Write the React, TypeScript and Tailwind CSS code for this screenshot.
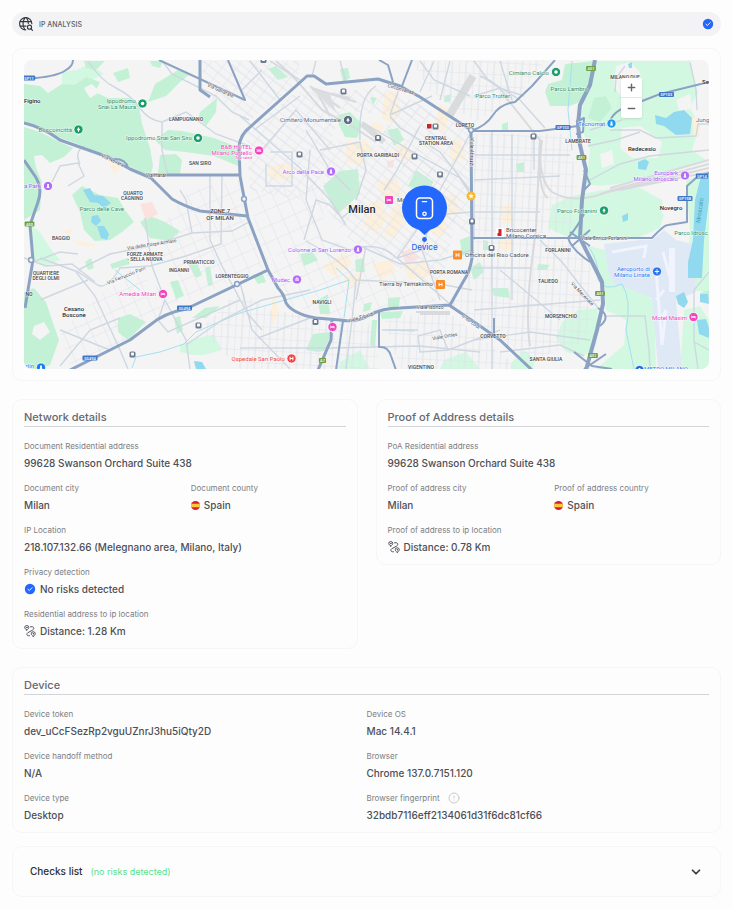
import { useState, type ReactNode } from 'react';
import { ChevronDown, CircleAlert, Minus, Plus } from 'lucide-react';

type Label = { x: number; y: number; text: string; size?: number; anchor?: 'start' | 'middle' | 'end'; rotate?: number };

const BRIGHT_PARKS = [
  '24,84 40,86 48,93 62,84 75,85 86,77 100,82 95,92 108,98 130,98 139,106 142,124 150,148 153,166 150,178 135,169 105,155 75,143 50,134 24,124',
  '24,127 40,132 60,142 73,148 64,157 50,163 42,155 34,156 36,168 42,182 40,210 24,220',
  '155,84 178,70 190,74 180,82 166,96 148,102',
  '155,140 168,130 182,131 214,138 240,148 238,166 214,156 185,152 165,150',
  '160,155 176,154 182,160 180,174 158,174',
  '200,112 217,98 216,112 206,126 198,118',
  '113,73 128,68 130,78 118,82',
  '84,61 105,61 96,70 86,68',
  '150,61 163,61 160,68 152,66',
  '72,195 82,186 100,195 118,198 125,210 134,222 122,232 110,240 95,241 84,230 80,212',
  '140,222 150,216 165,222 180,231 170,241 150,238',
  '24,292 34,288 46,302 52,320 59,340 50,365 40,369 24,369',
  '118,318 130,314 146,322 128,340 118,332',
  '110,264 128,258 130,264 112,269',
  '85,262 91,258 94,268 88,270',
  '170,282 178,280 184,296 176,299',
  '188,264 196,260 202,275 196,278',
  '205,268 210,266 213,285 208,286',
  '150,226 162,222 178,230 168,238',
  '338,115 350,112 362,124 357,138 345,137 339,125',
  '323,186 340,171 358,169 360,194 350,203 338,214 330,200',
  '387,130 398,128 404,140 394,146',
  '408,186 416,170 434,182 426,192',
  '268,69 276,66 288,77 278,80',
  '340,69 348,68 350,78 343,82',
  '445,96 451,94 450,102 444,102',
  '370,97 377,98 373,105',
  '545,92 548,84 562,80 565,64 594,61 590,80 584,100 570,106 550,106',
  '594,98 606,96 612,108 600,122 588,118',
  '460,240 470,236 470,252 462,256',
  '388,298 400,297 399,307 388,308',
  '364,304 372,302 370,310 363,312',
  '313,334 330,332 328,350 318,352 306,350',
  '380,312 403,311 400,318 382,319',
  '372,320 377,320 375,348 370,345',
  '252,275 262,272 266,282 258,284',
  '300,254 312,252 318,260 304,266',
  '318,300 328,294 330,314 320,314',
  '355,260 364,258 365,272 356,272',
  '492,288 508,288 510,298 494,296',
  '538,264 550,265 546,270 537,270',
  '516,164 524,162 524,172 517,172',
  '502,124 508,122 508,132 502,131',
  '192,318 205,308 220,306 206,318',
  '174,318 180,316 183,330 177,334',
  '470,268 480,262 484,272 474,280',
  '483,240 488,241 488,250 483,250',
  '700,293 709,290 709,300 702,298',
];

const LIGHT_PARKS = [
  '62,72 76,70 90,64 104,74 88,82 76,86 62,84',
  '60,92 72,88 80,96 66,104',
  '28,224 40,232 50,248 60,260 46,266 34,262 30,244',
  '180,345 196,338 214,335 222,350 204,355 194,355 180,352',
  '340,362 360,350 370,369 340,369',
  '444,360 466,352 480,369 440,369',
  '594,61 690,61 698,92 690,108 700,126 692,150 706,160 650,180 600,186 586,184 590,150 580,124 584,98',
  '548,228 552,205 572,196 602,190 640,188 662,200 664,214 660,228 640,237 600,241 586,238 565,236',
  '588,246 606,250 622,284 640,292 654,300 656,369 596,369 624,345 626,320 606,310 604,285',
  '556,338 562,322 578,310 598,308 596,346 584,356 566,352',
  '686,180 709,172 709,292 686,290 690,230',
  '684,310 700,306 709,320 709,369 680,369',
  '512,362 524,350 536,360 532,369 510,369',
];

// built-up land inside the green belt
const CLEARINGS = [
  '84,88 92,84 100,92 90,98',
  '60,166 70,160 82,168 76,180 58,182',
  '34,326 44,322 50,332 40,340 32,334',
  '616,66 630,62 640,72 638,92 622,98 614,86',
  '622,128 640,126 662,142 658,158 632,158 620,148',
  '676,100 690,94 692,108 680,112',
  '600,154 612,150 614,164 602,168',
  '664,186 686,184 684,222 662,214',
  '608,320 622,318 624,340 610,344',
];

const SANDS = [
  '384,94 396,90 400,112 392,124 382,118',
  '374,122 384,126 378,138 366,130',
  '268,165 290,164 292,178 270,180',
  '346,142 366,140 376,156 358,166 346,160',
  '440,104 452,112 444,132 434,128',
  '376,182 396,178 402,194 384,200',
  '366,204 380,200 388,216 378,234 364,226',
  '392,208 404,202 404,222 394,238 384,236',
  '434,198 454,194 460,210 448,216',
  '430,222 446,220 444,236 432,234',
  '322,266 346,252 352,264 334,276',
  '344,278 360,272 362,282 348,288',
  '372,264 390,260 396,272 380,280',
  '402,264 426,262 430,276 410,280',
  '448,144 460,138 466,156 452,164',
  '396,146 406,144 414,158 402,162',
  '110,166 118,160 120,170 114,174',
  '62,232 74,228 68,236',
  '500,206 512,203 513,222 503,224',
  '500,240 514,238 512,252 500,250',
  '692,118 698,116 700,136 694,138',
  '73,240 95,244 94,247 78,245',
  '272,300 276,296 278,316 272,324',
];

const WATERS = [
  '83,190 90,188 94,195 103,196 111,203 104,208 98,203 90,202',
  '92,216 98,215 101,221 96,226 91,222',
  '97,226 104,226 109,234 107,240 101,238',
  '655,115 666,118 674,112 684,110 692,118 690,134 676,135 664,126 656,124',
  '638,162 645,159 649,162 646,170 638,169',
  '701,176 709,175 709,200 704,240 702,278 688,278 688,262 693,240 695,200',
  '622,216 628,213 628,220 623,222',
  '676,296 684,292 688,302 684,308 678,304',
  '700,294 708,294 709,304 700,302',
  '697,320 706,319 709,328 709,338 699,334',
  '194,361 202,362 206,369 196,369',
  '628,64 632,62 632,68 629,68',
];

const GRIDS: [string, string][] = [
  ['246,132 296,92 330,92 380,88 400,94 440,120 340,110 320,180 300,200 250,190', 'url(#grid-tilt)'],
  ['190,190 240,180 246,216 262,268 190,300 150,240', 'url(#grid-slope)'],
  ['400,94 468,130 470,240 420,190 380,140', 'url(#grid-tilt)'],
  ['474,134 570,134 578,200 572,232 474,236', 'url(#grid-straight)'],
  ['474,240 570,240 590,260 590,340 530,360 450,306 472,260', 'url(#grid-straight)'],
  ['262,270 300,230 360,250 440,302 380,308 350,320 292,306', 'url(#grid-slope)'],
  ['270,310 372,324 380,369 240,369 200,330 240,290', 'url(#grid-straight)'],
  ['384,318 448,312 520,369 400,369', 'url(#grid-straight)'],
  ['60,330 130,270 180,300 120,345 70,366', 'url(#grid-slope)'],
  ['330,140 420,150 460,200 440,290 350,240 320,200', 'url(#grid-tilt)'],
  ['200,61 300,61 296,84 250,120 210,100', 'url(#grid-tilt)'],
  ['474,61 545,61 520,96 475,122 430,90 412,61', 'url(#grid-straight)'],
  ['248,190 320,184 324,220 300,232 264,262', 'url(#grid-slope)'],
];

const MINOR_ROADS = [
  'M88 61 Q100 80 116 88 T140 108 T162 122 V150 L168 176',
  'M163 62 L172 74 L216 96 L232 112 L249 120',
  'M162 122 L186 112 L216 134 L249 146',
  'M52 182 L60 166 L78 163 L84 176 L68 186 M80 164 Q74 152 84 146',
  'M210 176 V240 L222 266 L248 314 L262 330',
  'M222 176 L221 244 L186 256 L150 266 L120 268 Q106 292 96 284 L78 272 L40 258',
  'M76 272 L95 296 L120 350 L128 369',
  'M78 270 L110 254 L150 246 L192 233 L232 231 L249 222',
  'M145 218 L152 266 L165 300 L186 340 L190 369',
  'M192 233 L186 200 L180 190',
  'M165 300 L158 320 L168 332 L240 300',
  'M24 258 L46 266 L72 264 L95 282',
  'M33 262 L60 252 L78 254 M40 300 L88 280',
  'M60 366 L90 330 L120 318 M60 330 L110 350',
  'M186 345 L222 320 L262 300 L310 290',
  'M240 348 H330 L420 346 L480 352',
  'M240 282 L252 330 L290 369 M258 338 L310 318',
  'M306 241 Q342 260 356 280 L440 284 L472 290',
  'M304 240 L316 200 L330 205 L342 218 L356 206',
  'M240 116 L300 168 L330 200 L346 225',
  'M254 130 L300 96 M262 150 L296 110 L330 150',
  'M266 164 V186 H292 V152 H270',
  'M320 150 L360 142 L366 170 L356 200',
  'M360 140 Q358 96 376 86',
  'M306 130 L330 170 L350 190',
  'M362 122 L420 156 L460 178 L474 200 L474 240',
  'M390 116 L400 128 L440 152 L470 190',
  'M390 115 L400 86 M390 115 L432 96 M420 126 L396 172 L384 190',
  'M471 132 L440 190 L422 250 L397 258 L450 304',
  'M422 250 L440 300 M397 258 L420 225 L446 214 L472 212',
  'M360 246 L400 264 L440 260 L472 250',
  'M310 150 L306 200 L322 240 L350 250 Q380 240 396 258',
  'M356 280 L352 320 L346 369 M366 246 L356 300',
  'M418 336 L420 352 L448 350 L440 330 Z M448 350 L500 330 M382 330 H418',
  'M492 130 V369 M512 134 V300 M534 134 V170 M474 155 H570 M474 180 L560 176 M474 212 H540 M474 268 H530',
  'M540 240 L562 262 L598 308 M474 310 L600 300 M500 270 L536 300 L560 320',
  'M474 340 L530 332 L590 340 M500 352 L560 345 L584 356',
  'M590 130 L622 120 M610 130 L640 130 L656 138 L696 136 L698 124 L709 124',
  'M615 92 L616 78 L625 66 M690 62 L696 90 L697 110 M588 146 L616 140 L640 132',
  'M590 180 L620 164 L650 156 L709 150',
  'M604 316 L645 316 L649 350 L650 369 M694 290 V340 L698 369 M694 290 L709 272 M694 342 L709 350',
  'M474 61 L488 80 L520 100 L545 128 M500 61 L512 100 M474 96 L500 88 L524 96',
  'M420 61 L434 80 L470 96 M434 61 L420 92 M450 61 L440 100',
  'M270 61 L300 80 M316 61 L312 76 M340 61 L346 82 M240 92 L262 70 M250 61 L280 100',
];

const RAILS = [
  'M276 61 L292 75 L322 110 L352 126 L376 142',
  'M310 86 L340 108 M314 90 L350 98 M312 88 L356 102 M318 94 L330 116',
  'M480 76 Q500 84 508 100 L540 140 Q538 180 552 192 Q576 206 612 190 L709 164',
  'M542 140 Q536 190 548 198 M540 140 L536 230 Q524 310 530 346',
  'M600 194 L709 168 M610 188 L709 160 M620 190 L709 172',
  'M416 312 H450 M420 314 H450',
];

const MAIN_ROADS: [string, number][] = [
  ['M24 78 H36 Q58 76 66 70 Q73 66 73 60', 2],
  ['M24 123 Q42 127 60 140 L108 157 L130 169 L151 178 L172 199 Q184 206 200 211 L247 216', 3],
  ['M112 159 Q126 158 128 168', 2],
  ['M146 175 H240', 3],
  ['M24 160 L35 176 Q43 188 38 202 L30 225 L33 260 L25 308', 3],
  ['M200 60 V90 L210 97', 3],
  ['M159 60 L200 79 L245 100 L228 60', 2],
  ['M240 176 L239 146 Q241 134 249 128 L296 86 L307 76 L314 76 L326 84 L378 79 L400 86 L420 97 L471 130', 3],
  ['M471 130 L472 258 Q470 272 463 282 L450 305 L400 308 Q382 308 370 315 Q356 323 340 320 L316 318 Q293 314 286 303 Q284 294 278 288 L268 270 L248 218 L240 176', 3],
  ['M268 270 L186 309 Q164 313 150 325 L130 340 L70 370', 3],
  ['M471 131 L540 131 L578 126', 2],
  ['M471 131 Q486 126 493 115 T515 102 L532 86 L555 60', 2],
  ['M379 60 L388 65 L393 82', 2],
  ['M412 60 L402 86', 2],
  ['M595 60 L590 85 L580 105 L578 124 L580 145 L586 170 L582 200 L580 238 L590 258 L602 282 L603 304 L597 330 L586 370', 4],
  ['M576 122 L584 118 L583 132 L576 134 M584 170 L590 184 L584 190', 2],
  ['M610 121 Q614 110 632 105 L660 94 L709 82', 2],
  ['M709 173 L696 178 L687 186 V222 L668 225 Q664 225 652 238 L590 238 H472', 2],
  ['M570 232 L590 246 M572 246 L590 230 M568 238 Q578 226 584 214 M590 262 Q572 250 568 238', 2],
  ['M598 308 Q612 316 600 326 M574 352 L592 366 L612 369 M584 369 L606 354', 2],
  ['M449 305 L480 326 L500 340 L532 370', 3],
  ['M379 311 V347 Q388 346 391 356 L396 370', 2],
  ['M343 321 L336 370', 2],
  ['M332 318 L331 340 L318 370', 3],
  ['M494 318 V336', 2],
];

const AREAS: Label[] = [
  { x: 186, y: 121, text: 'LAMPUGNANO' },
  { x: 200, y: 165, text: 'SAN SIRO' },
  { x: 133, y: 195, text: 'QUARTO' },
  { x: 132, y: 200, text: 'CAGNINO' },
  { x: 220, y: 213, text: 'ZONE 7', size: 6 },
  { x: 220, y: 220, text: 'OF MILAN', size: 6 },
  { x: 61, y: 240, text: 'BAGGIO' },
  { x: 46, y: 275, text: 'QUARTIERE' },
  { x: 46, y: 280, text: 'DEGLI OLMI' },
  { x: 145, y: 256, text: 'FORZE ARMATE' },
  { x: 145, y: 261, text: '- SELLA NUOVA' },
  { x: 199, y: 264, text: 'PRIMATICCIO' },
  { x: 179, y: 272, text: 'INGANNI' },
  { x: 232, y: 278, text: 'LORENTEGGIO' },
  { x: 322, y: 304, text: 'NAVIGLI' },
  { x: 378, y: 157, text: 'PORTA GARIBALDI' },
  { x: 436, y: 140, text: 'CENTRAL' },
  { x: 436, y: 145, text: 'STATION AREA' },
  { x: 465, y: 127, text: 'LORETO' },
  { x: 578, y: 143, text: 'LAMBRATE' },
  { x: 625, y: 79, text: 'MILANO DUE' },
  { x: 449, y: 274, text: 'PORTA ROMANA' },
  { x: 558, y: 252, text: 'FORLANINI' },
  { x: 548, y: 283, text: 'TALIEDO' },
  { x: 561, y: 318, text: 'MORSENCHIO' },
  { x: 493, y: 338, text: 'CORVETTO' },
  { x: 546, y: 361, text: 'SANTA GIULIA' },
  { x: 421, y: 369, text: 'VIGENTINO' },
  { x: 29, y: 296, text: 'NO' },
];

const TOWNS: Label[] = [
  { x: 24, y: 103, text: 'Figino', anchor: 'start' },
  { x: 74, y: 311, text: 'Cesano' },
  { x: 74, y: 317, text: 'Boscone' },
  { x: 642, y: 151, text: 'Redecesio' },
  { x: 671, y: 210, text: 'Novegro' },
  { x: 702, y: 84, text: 'Se', anchor: 'start' },
  { x: 362, y: 213, text: 'Milan', size: 11 },
];

const STREETS: Label[] = [
  { x: 220, y: 92, text: 'Via Gallarate', rotate: 24 },
  { x: 112, y: 162, text: 'Via Novara', rotate: 24 },
  { x: 156, y: 177, text: 'Via Harar' },
  { x: 152, y: 246, text: 'Via delle Forze Armate', rotate: -9 },
  { x: 127, y: 277, text: 'Via Ferruccio Parri', rotate: -22 },
  { x: 401, y: 91, text: 'Circonvallaz.', rotate: 16 },
  { x: 470, y: 152, text: 'Viale Abruzzi', rotate: 90 },
  { x: 361, y: 319, text: 'Viale Tibaldi', rotate: -16 },
  { x: 430, y: 309, text: 'Viale Isonzo' },
  { x: 445, y: 338, text: 'Viale Ortles', rotate: -10 },
  { x: 470, y: 323, text: 'C.so Lodi', rotate: 36 },
  { x: 604, y: 240, text: 'Viale Enrico Forlanini' },
  { x: 581, y: 295, text: 'Via Mecenate', rotate: 46 },
];

const GREEN = '#2f8f6b';
const PURPLE = '#a855f7';
const PINK = '#f542c0';
const BLUE = '#3478f6';
const SLATE = '#5b6b80';
const DARK = '#4b4f56';

const PLACES: (Label & { color: string })[] = [
  { x: 136, y: 103, text: 'Ippodromo', color: GREEN },
  { x: 136, y: 109, text: 'Snai La Maura', color: GREEN },
  { x: 72, y: 132, text: 'Boscoincittà', color: GREEN },
  { x: 192, y: 140, text: 'Ippodromo Snai San Siro', color: GREEN },
  { x: 124, y: 211, text: 'Parco delle Cave', color: GREEN },
  { x: 549, y: 75, text: 'Cimiano Calcio', color: GREEN },
  { x: 510, y: 98, text: 'Parco Trotter', color: GREEN },
  { x: 588, y: 91, text: 'Parco Lambro', color: GREEN },
  { x: 597, y: 213, text: 'Parco Forlanini', color: GREEN },
  { x: 708, y: 235, text: 'Parco Idrosc', color: GREEN },
  { x: 341, y: 122, text: 'Cimitero Monumentale', color: SLATE },
  { x: 324, y: 174, text: 'Arco della Pace', color: PURPLE },
  { x: 351, y: 252, text: 'Colonne di San Lorenzo', color: PURPLE },
  { x: 290, y: 282, text: 'Mudec', color: PURPLE },
  { x: 24, y: 188, text: 'a Park', anchor: 'start', color: PURPLE },
  { x: 678, y: 175, text: 'Europark', color: PURPLE },
  { x: 678, y: 181, text: 'Milano Idroscalo', color: PURPLE },
  { x: 252, y: 149, text: 'B&B HOTEL', color: PINK },
  { x: 252, y: 155, text: 'Milano Portello', color: PINK },
  { x: 252, y: 159, text: 'Top rated', size: 4, color: PINK },
  { x: 156, y: 296, text: 'Amedia Milan', color: PINK },
  { x: 687, y: 320, text: 'Motel Maxim', color: PINK },
  { x: 285, y: 361, text: 'Ospedale San Paolo', color: '#ef4444' },
  { x: 605, y: 126, text: 'Tecnomat', color: BLUE },
  { x: 650, y: 271, text: 'Aeroporto di', color: BLUE },
  { x: 650, y: 277, text: 'Milano Linate', color: BLUE },
  { x: 34, y: 368, text: 'rlin', color: BLUE },
  { x: 688, y: 371, text: 'METRO MILANO', color: BLUE },
  { x: 433, y: 286, text: 'Tierra by Temakinho', color: DARK },
  { x: 465, y: 257, text: 'Officina del Riso Cadore', anchor: 'start', color: DARK },
  { x: 506, y: 232, text: 'Bricocenter', anchor: 'start', color: DARK },
  { x: 506, y: 238, text: 'Milano Corsica', anchor: 'start', color: DARK },
  { x: 397, y: 202, text: 'Mo', anchor: 'start', color: DARK },
  { x: 696, y: 122, text: 'Jung', anchor: 'start', color: SLATE },
];

const PINS: [number, number, string, string][] = [
  [142.5, 103.5, '#1a9c6b', 'ring'],
  [78.5, 129.5, '#1a9c6b', 'tree'],
  [198, 138, '#1a9c6b', 'ring'],
  [556, 72, '#1a9c6b', 'ring'],
  [604, 210.5, '#1a9c6b', 'tree'],
  [348, 120, '#5b6b80', 'tree'],
  [331, 171.5, '#b26bf7', 'tower'],
  [358, 249.5, '#b26bf7', 'tower'],
  [297, 279.5, '#b26bf7', 'museum'],
  [48, 186, '#b26bf7', 'tower'],
  [685, 175.5, '#b26bf7', 'tower'],
  [259, 150.5, '#f542c0', 'bed'],
  [163, 294, '#f542c0', 'bed'],
  [332.5, 327, '#f542c0', 'bed'],
  [693.5, 317, '#f542c0', 'bed'],
  [291.5, 358.5, '#ef4444', 'hospital'],
  [611.5, 123.5, '#1a9bf0', 'tower'],
  [657, 271.5, '#2b74f5', 'plus'],
  [41, 367.5, '#1a7bf0', 'tower'],
  [639.5, 370, '#1a6bf0', 'tower'],
];

const TRANSIT = [
  [343.5, 91.5], [378, 138], [299.5, 154.5], [414.5, 156.5], [440, 174.5], [435.5, 126.5], [533.5, 136.5], [491.5, 248],
  [472, 221.5], [315.5, 322], [198.5, 325.5], [132.5, 354.5], [263.5, 60],
];

const SHIELDS: [number, number, string, string][] = [
  [29, 78, 'SP11', '#3f78c9'],
  [29.5, 224, 'A50', '#6d9f45'],
  [591, 68.5, 'A51', '#6d9f45'],
  [581.5, 157.5, 'A51', '#6d9f45'],
  [600, 293.5, 'A51', '#6d9f45'],
  [593, 355.5, 'A51', '#6d9f45'],
  [322.5, 360.5, 'A7', '#6d9f45'],
  [563, 127.5, 'SP103', '#3f78c9'],
  [666.5, 94.5, 'SP103', '#3f78c9'],
  [702, 176, 'SP14', '#3f78c9'],
  [685, 198.5, 'SP15B', '#3f78c9'],
  [184.5, 308, 'SS494', '#3f78c9'],
  [90, 358, 'SS494', '#3f78c9'],
];

const GLYPHS: Record<string, ReactNode> = {
  ring: <circle r="1.8" fill="#fff" />,
  tree: <path d="M0 -2.6 L1.7 .8 H.5 V2.2 H-.5 V.8 H-1.7 Z" fill="#fff" />,
  tower: <path d="M-.9 -2 H.9 V.6 L1.7 2 H-1.7 L-.9 .6 Z" fill="#fff" />,
  museum: <path d="M-2 -.8 L0 -2.2 L2 -.8 Z M-1.6 -.4 H-.8 V1.6 H-1.6 Z M-.4 -.4 H.4 V1.6 H-.4 Z M.8 -.4 H1.6 V1.6 H.8 Z" fill="#fff" />,
  bed: <path d="M-2.2 -1.4 H-1.6 V.2 H2.2 V1.5 H1.7 V1 H-1.7 V1.5 H-2.2 Z M-1.2 -.9 H-.2 V-.1 H-1.2 Z M.1 -.9 H1.4 Q2 -.9 2 -.1 H.1 Z" fill="#fff" />,
  hospital: <path d="M-1.4 -1.8 V1.8 M1.4 -1.8 V1.8 M-1.4 0 H1.4" stroke="#fff" fill="none" />,
  plus: <path d="M0 -2.2 V2.2 M-2.2 0 H2.2" stroke="#fff" fill="none" />,
};

const MapText = ({ label, fill, size, weight }: { label: Label; fill: string; size: number; weight: number }) => (
  <text
    x={label.x}
    y={label.y}
    textAnchor={label.anchor || 'middle'}
    fontSize={label.size || size}
    fontWeight={weight}
    fill={fill}
    stroke="#ffffff"
    strokeOpacity="0.7"
    strokeWidth="1"
    paintOrder="stroke"
    transform={label.rotate ? `rotate(${label.rotate} ${label.x} ${label.y})` : undefined}
  >
    {label.text}
  </text>
);

const CityMap = () => (
  <svg viewBox="24 60 685 309" className="block h-auto w-full rounded-lg font-[Roboto,sans-serif]" role="img" aria-label="Map of Milan">
    <defs>
      <pattern id="grid-straight" width="14" height="12" patternUnits="userSpaceOnUse" patternTransform="rotate(3)">
        <path d="M0 0 H14 M0 0 V12 M7 0 V12" stroke="#dde2e9" strokeWidth="1" fill="none" />
      </pattern>
      <pattern id="grid-tilt" width="12" height="14" patternUnits="userSpaceOnUse" patternTransform="rotate(38)">
        <path d="M0 0 H12 M0 0 V14 M0 7 H12" stroke="#dde2e9" strokeWidth="1" fill="none" />
      </pattern>
      <pattern id="grid-slope" width="13" height="15" patternUnits="userSpaceOnUse" patternTransform="rotate(-24)">
        <path d="M0 0 H13 M0 0 V15" stroke="#dde2e9" strokeWidth="1" fill="none" />
      </pattern>
    </defs>
    <rect x="24" y="60" width="685" height="309" fill="#f4f4f5" />

    {LIGHT_PARKS.map((points) => <polygon key={points} points={points} fill="#d3f8e2" />)}
    {BRIGHT_PARKS.map((points) => <polygon key={points} points={points} fill="#c3f1d5" />)}
    {CLEARINGS.map((points) => <polygon key={points} points={points} fill="#f4f4f5" />)}
    {SANDS.map((points) => <polygon key={points} points={points} fill="#fcf0dc" />)}
    <polygon points="140,204 152,202 158,214 146,220" fill="#fbe2e0" />
    <polygon points="401,252 410,249 420,258 406,264" fill="#fbe2e0" />
    <polygon points="387,161 394,160 393,168 387,167" fill="#fbe2e0" />

    {GRIDS.map(([points, fill]) => <polygon key={points} points={points} fill={fill} />)}

    {/* Linate airport */}
    <path d="M604 244 L640 240 L652 240 L664 230 L676 240 L692 244 L696 292 L676 300 L682 369 H658 L652 298 L632 290 L614 284 L608 270 Z" fill="#dfe8f5" />
    <path d="M612 252 L646 246 L644 258 M656 270 L662 345 M663 252 L672 285 M656 300 L664 290 M660 320 L666 310 L662 345" stroke="#f1f3ff" strokeWidth="3" fill="none" />
    <path d="M672 248 V292" stroke="#f1f3ff" strokeWidth="6" />

    {WATERS.map((points) => <polygon key={points} points={points} fill="#90d9ef" />)}
    <path d="M132 368 L136 357 L160 352 L184 344 L196 332 L240 313 L320 290 L349 280 M336 268 L349 280 L344 318 M115 270 L140 290 M572 61 L568 110 L572 150 M588 246 Q600 262 598 280 Q604 292 622 284 Q632 300 626 330 L634 369 M390 330 L414 331" stroke="#a5dff0" strokeWidth="1" fill="none" />

    {RAILS.map((d) => <path key={d} d={d} stroke="#d9dadd" strokeWidth="2" fill="none" />)}
    <path d="M473 76 L449 116" stroke="#dadbdd" strokeWidth="8" />
    <path d="M362 124 L384 142" stroke="#dadbdd" strokeWidth="6" />
    <path d="M310 88 L336 112 L330 94 Z" fill="#dcdde0" />

    {MINOR_ROADS.map((d) => <path key={d} d={d} stroke="#cfd7e1" strokeWidth="1.4" fill="none" />)}
    {MAIN_ROADS.map(([d, width]) => (
      <path key={d} d={d} stroke="#8ba2c3" strokeWidth={width} strokeLinejoin="round" fill="none" />
    ))}
    {[[237, 284], [471, 130], [244, 199], [31, 260]].map(([x, y]) => (
      <circle key={x} cx={x} cy={y} r="2.4" fill="#f4f4f5" stroke="#8ba2c3" strokeWidth="1.5" />
    ))}

    {SHIELDS.map(([x, y, text, fill]) => (
      <g key={`${x}-${y}`}>
        <rect x={x - text.length * 1.3 - 1} y={y - 2.5} width={text.length * 2.6 + 2} height="5" rx="1" fill={fill} />
        <text x={x} y={y + 1.5} fontSize="4" fontWeight="500" fill="#fff" textAnchor="middle">{text}</text>
      </g>
    ))}

    {TRANSIT.map(([x, y]) => (
      <g key={`${x}-${y}`} transform={`translate(${x} ${y})`}>
        <rect x="-3" y="-3" width="6" height="6" rx="1.6" fill="#6c7b90" />
        <rect x="-1.4" y="-1.9" width="2.8" height="3" rx="0.6" fill="#fff" />
      </g>
    ))}
    <rect x="427" y="124" width="4.5" height="4.5" fill="#c1272d" />

    {STREETS.map((label) => <MapText key={label.text} label={label} fill="#4b4f56" size={5} weight={400} />)}
    {AREAS.map((label) => <MapText key={label.text} label={label} fill="#3f4349" size={5} weight={500} />)}
    {TOWNS.map((label) => <MapText key={label.text} label={label} fill="#25272b" size={6} weight={500} />)}
    {PLACES.map((label) => (
      <MapText key={`${label.text}-${label.y}`} label={{ anchor: 'end', ...label }} fill={label.color} size={6} weight={400} />
    ))}
    <text transform="translate(700 223) rotate(-82)" fontSize="6" fill="#3d9fb5">Idroscalo</text>

    {PINS.map(([x, y, fill, glyph]) => (
      <g key={`${x}-${y}`} transform={`translate(${x} ${y})`}>
        <path d="M-3 3 L0 6 L3 3 Z" fill="#fff" />
        <circle r="4.6" fill={fill} stroke="#fff" strokeWidth="0.8" />
        {GLYPHS[glyph]}
      </g>
    ))}

    <g transform="translate(389 200)">
      <rect x="-4" y="-4" width="8" height="8" rx="1" fill="#f542c0" />
      {GLYPHS.bed}
    </g>
    {[[457.5, 255], [440.5, 284.5]].map(([x, y]) => (
      <g key={x} transform={`translate(${x} ${y})`}>
        <rect x="-4.5" y="-4.5" width="9" height="9" rx="1" fill="#fb8b24" />
        {GLYPHS.hospital}
      </g>
    ))}
    <rect x="496" y="228" width="8" height="9" rx="1" fill="#fff" />
    <path d="M498.5 229 H501.5 V236 H497.5 V233 H498.5 Z" fill="#d6202b" />
    <circle cx="471" cy="196" r="4.5" fill="#fbb52e" />
    <path d="M471 193.2 L471.8 195.1 L473.8 195.3 L472.3 196.6 L472.8 198.6 L471 197.5 L469.2 198.6 L469.7 196.6 L468.2 195.3 L470.2 195.1 Z" fill="#fff" />

    {/* device marker */}
    <path d="M418 229 L424.5 235 L431 229 Z" fill="#2467fb" />
    <circle cx="424.5" cy="208" r="22.5" fill="#2467fb" />
    <rect x="416.5" y="198" width="16" height="20.5" rx="3.5" fill="none" stroke="#fff" strokeWidth="1.5" />
    <path d="M422.3 201.6 H426.7" stroke="#fff" strokeWidth="1.2" strokeLinecap="round" />
    <circle cx="424.5" cy="213.8" r="1.7" fill="none" stroke="#fff" strokeWidth="1.3" />
    <circle cx="424.5" cy="239.5" r="2.4" fill="#2467fb" />
    <text x="424.5" y="250" fontSize="8" fontWeight="500" textAnchor="middle" fill="#2467fb" className="font-[Inter,sans-serif]">Device</text>
  </svg>
);

const GlobeSearchIcon = () => (
  <svg viewBox="0 0 24 24" className="size-[14px]" fill="none" stroke="#36383e" strokeWidth="2" strokeLinecap="round">
    <path d="M22 11.5 A10.5 10.5 0 1 0 11.5 22" />
    <path d="M10 1.5 C6 8 6 15 10 21.5 M13 1.5 C15 4.5 16 7.5 16 11 M2 8 H21 M2 15.5 H12" />
    <circle cx="18" cy="17.5" r="3.5" />
    <path d="M20.5 20 L23 22.8" />
  </svg>
);

const VerifiedIcon = () => (
  <svg viewBox="0 0 12 12" className="size-[12px] shrink-0">
    <circle cx="6" cy="6" r="5.2" fill="#2467fb" />
    <path d="M3.9 6.2 L5.4 7.5 L8.1 4.7" fill="none" stroke="#fff" strokeWidth="0.9" strokeLinecap="round" strokeLinejoin="round" />
  </svg>
);

const DistanceIcon = () => (
  <svg viewBox="0 0 24 24" className="size-[12px] shrink-0" fill="none" stroke="#50535a" strokeWidth="2" strokeLinecap="round" strokeLinejoin="round">
    <path d="M5.5 10 C3 8.5 1.5 7 1.5 5 A4 4 0 0 1 9.5 5 C9.5 7 8 8.500 5.500 10 Z" />
    <circle cx="5.5" cy="5" r="0.6" />
    <path d="M18.5 22.5 C16 21 14.5 19.5 14.5 17.5 A4 4 0 0 1 22.5 17.5 C22.5 19.5 21 21 18.5 22.5 Z" />
    <circle cx="18.5" cy="17.5" r="0.6" />
    <path d="M13 3.500 H16 C20.500 3.500 20.500 8 17.500 10 L7.500 15.500 C4.500 17.500 5.500 21.500 9 21.500 H11" />
  </svg>
);

const SpainFlag = () => (
  <svg viewBox="0 0 10 10" className="size-[9px] shrink-0">
    <circle cx="5" cy="5" r="5" fill="#d91e30" />
    <path d="M.4 3 H9.6 Q10.4 5 9.6 7 H.4 Q-.4 5 .4 3 Z" fill="#fdc83c" />
  </svg>
);

const Panel = ({ title, children }: { title: string; children: ReactNode }) => (
  <section className="rounded-[10px] border border-[#f6f6f8] px-[11px] pt-[9px] pb-2">
    <h2 className="mb-[11px] border-b border-[#d3d4d8] pb-px text-[11px] leading-4 font-medium text-[#66686e]">{title}</h2>
    {children}
  </section>
);

const Field = ({ label, hint, icon, wide, children }: { label: string; hint?: boolean; icon?: ReactNode; wide?: boolean; children: ReactNode }) => (
  <div className={wide ? 'col-span-2' : ''}>
    <dt className="flex items-center gap-2 text-[8px] leading-4 text-[#7c7e84]">
      {label}
      {hint && <CircleAlert className="size-[12px] text-[#c9cacf]" strokeWidth={2} />}
    </dt>
    <dd className="flex items-center gap-1 text-[10px] leading-[18px] font-medium text-[#4d4f56]">
      {icon}
      {children}
    </dd>
  </div>
);

const App = () => {
  const [open, setOpen] = useState(false);

  return (
    <main className="min-h-screen bg-[#fdfdfd] p-3 font-[Inter,sans-serif]">
      <header className="flex h-6 items-center rounded-full bg-[#f3f3f5] px-[7px]">
        <GlobeSearchIcon />
        <h1 className="ml-[6px] flex-1 text-[7px] leading-none font-medium text-[#5c5e64]">IP ANALYSIS</h1>
        <VerifiedIcon />
      </header>

      <section className="relative mt-3 rounded-[10px] border border-[#f6f6f8] p-[11px]">
        <CityMap />
        <div className="absolute top-[29px] right-[78px] w-[21px] divide-y divide-[#e6e6e6] rounded-[2px] bg-white shadow-sm">
          <button type="button" aria-label="Zoom in" className="flex h-5 w-full items-center justify-center text-[#66676b]">
            <Plus className="size-[11px]" strokeWidth={3} />
          </button>
          <button type="button" aria-label="Zoom out" className="flex h-5 w-full items-center justify-center text-[#66676b]">
            <Minus className="size-[11px]" strokeWidth={3} />
          </button>
        </div>
      </section>

      <div className="mt-[18px] grid grid-cols-2 items-start gap-[18px]">
        <Panel title="Network details">
          <dl className="grid grid-cols-2 gap-x-3 gap-y-2">
            <Field wide label="Document Residential address">99628 Swanson Orchard Suite 438</Field>
            <Field label="Document city">Milan</Field>
            <Field label="Document county" icon={<SpainFlag />}>Spain</Field>
            <Field wide label="IP Location">218.107.132.66 (Melegnano area, Milano, Italy)</Field>
            <Field wide label="Privacy detection" icon={<VerifiedIcon />}>No risks detected</Field>
            <Field wide label="Residential address to ip location" icon={<DistanceIcon />}>Distance: 1.28 Km</Field>
          </dl>
        </Panel>
        <Panel title="Proof of Address details">
          <dl className="grid grid-cols-2 gap-x-3 gap-y-2">
            <Field wide label="PoA Residential address">99628 Swanson Orchard Suite 438</Field>
            <Field label="Proof of address city">Milan</Field>
            <Field label="Proof of address country" icon={<SpainFlag />}>Spain</Field>
            <Field wide label="Proof of address to ip location" icon={<DistanceIcon />}>Distance: 0.78 Km</Field>
          </dl>
        </Panel>
      </div>

      <div className="mt-[18px]">
        <Panel title="Device">
          <dl className="grid grid-cols-2 gap-y-2">
            <Field label="Device token">dev_uCcFSezRp2vguUZnrJ3hu5iQty2D</Field>
            <Field label="Device OS">Mac 14.4.1</Field>
            <Field label="Device handoff method">N/A</Field>
            <Field label="Browser">Chrome 137.0.7151.120</Field>
            <Field label="Device type">Desktop</Field>
            <Field label="Browser fingerprint" hint>32bdb7116eff2134061d31f6dc81cf66</Field>
          </dl>
        </Panel>
      </div>

      <button
        type="button"
        aria-expanded={open}
        onClick={() => setOpen(!open)}
        className="mt-[13px] flex h-[51px] w-full items-center rounded-[10px] border border-[#f6f6f8] px-[17px] text-left"
      >
        <span className="text-[10px] font-medium text-[#2c2e33]">Checks list</span>
        <span className="ml-2 text-[9px] text-[#5be08c]">(no risks detected)</span>
        <ChevronDown className={open ? 'ml-auto size-[14px] rotate-180 text-[#36383e]' : 'ml-auto size-[14px] text-[#36383e]'} strokeWidth={3} />
      </button>
    </main>
  );
};

export default App;
